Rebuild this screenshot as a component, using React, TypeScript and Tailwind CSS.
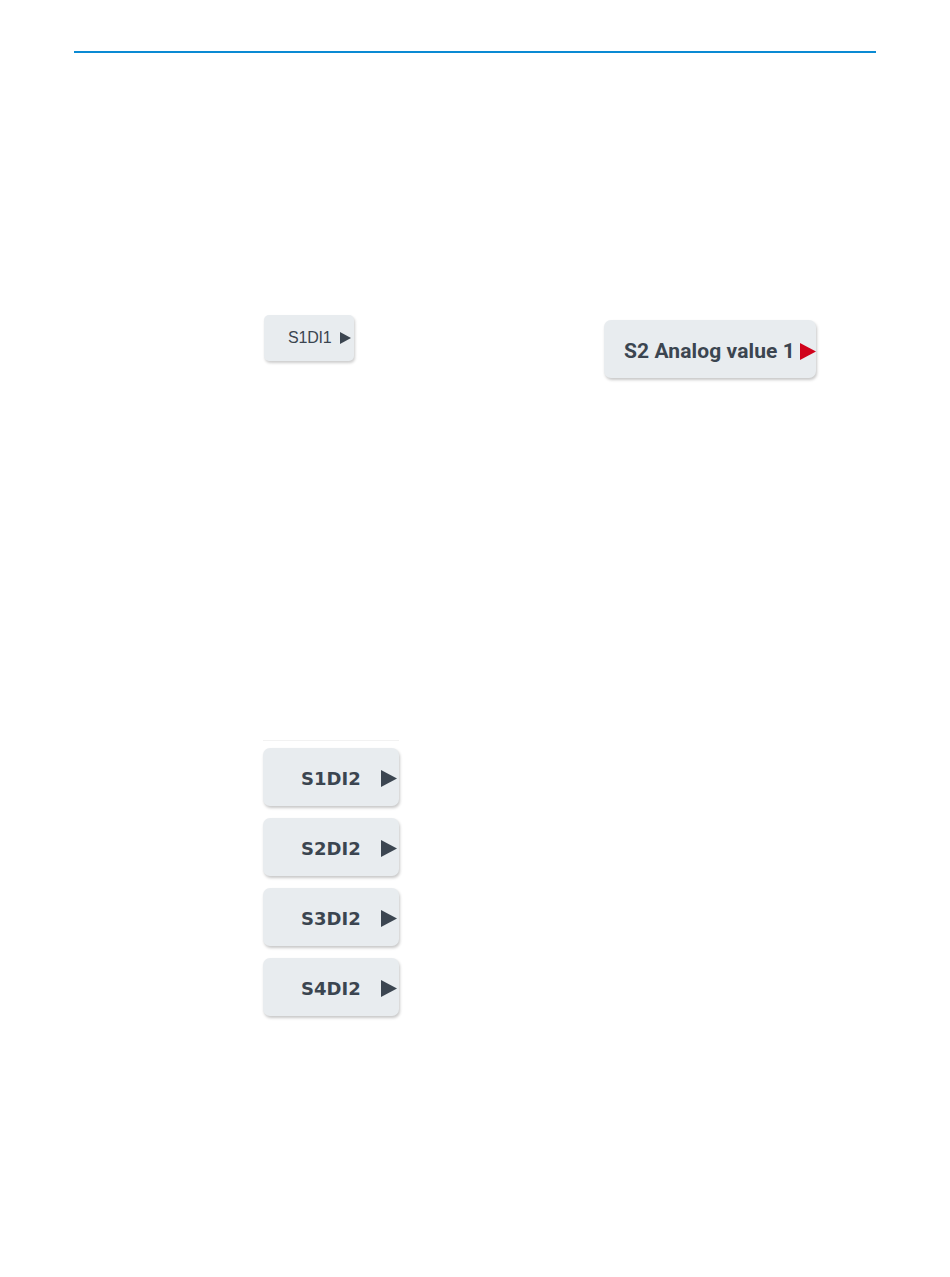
import React from "react";

function Arrow({ className, w, h }: { className: string; w: number; h: number }) {
  return (
    <svg width={w} height={h} viewBox={`0 0 ${w} ${h}`} className={className}>
      <polygon points={`0,0 ${w},${h / 2} 0,${h}`} />
    </svg>
  );
}

function ColumnNode({ label }: { label: string }) {
  return (
    <div className="flex items-center w-[136px] h-[58px] rounded-[7px] bg-[#e8ecef] shadow-[1px_2px_3px_rgba(0,0,0,0.22)]">
      <span className="ml-[38px] pt-[3px] w-[62px] text-[18px] font-bold text-[#3b4550] font-['DejaVu_Sans',sans-serif] tracking-[0px]">
        {label}
      </span>
      <Arrow className="ml-[18px] mt-[2px] fill-[#3b4550]" w={16} h={17} />
    </div>
  );
}

export default function App() {
  return (
    <div className="w-[950px] h-[1277px] bg-white overflow-hidden">
      <div className="pt-[51px] px-[74px]">
        <div className="h-[2px] bg-[#0a8ad3]" />
      </div>

      <div className="flex items-start mt-[262px] pl-[264px]">
        <div className="flex items-center w-[90px] h-[46px] rounded-[5px] bg-[#e8ecef] shadow-[1px_2px_3px_rgba(0,0,0,0.2)]">
          <span className="ml-[24px] text-[16px] text-[#3b4550] font-['Liberation_Sans',Arial,sans-serif] tracking-[-0.2px]">
            S1DI1
          </span>
          <Arrow className="ml-[9px] fill-[#3b4550]" w={11} h={12} />
        </div>

        <div className="flex items-center ml-[250px] mt-[5px] w-[212px] h-[58px] rounded-[7px] bg-[#e8ecef] shadow-[1px_2px_3px_rgba(0,0,0,0.22)]">
          <span className="ml-[20px] pt-[6px] text-[21px] font-bold text-[#3b4550] font-['Roboto',sans-serif] tracking-[0.1px]">
            S2 Analog value 1
          </span>
          <Arrow className="ml-auto mt-[4px] fill-[#d0021b]" w={16} h={17} />
        </div>
      </div>

      <div className="ml-[263px] mt-[362px] w-[136px]">
        <div className="h-px bg-[#f2f2f2] mb-[7px]" />
        <div className="flex flex-col gap-[12px]">
          <ColumnNode label="S1DI2" />
          <ColumnNode label="S2DI2" />
          <ColumnNode label="S3DI2" />
          <ColumnNode label="S4DI2" />
        </div>
      </div>
    </div>
  );
}
